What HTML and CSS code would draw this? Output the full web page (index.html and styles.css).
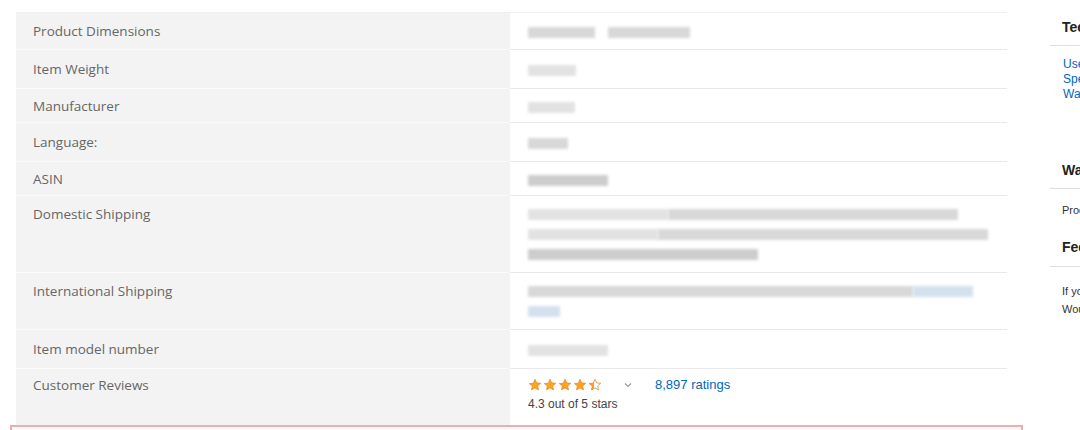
FILE: index.html
```html
<!DOCTYPE html>
<html>
  <head>
    <title>Product information</title>
    <meta charset="utf-8" />
    <link rel="stylesheet" href="styles.css">
  </head>
  <body>
    <div class="page">
      <div class="main">
        <table class="details" cellspacing="0" cellpadding="0">
          <tr>
            <th>Product Dimensions</th>
            <td><span class="blur" style="width:67px"></span><span class="blur" style="width:82px;margin-left:13px"></span></td>
          </tr>
          <tr class="tall">
            <th>Item Weight</th>
            <td><span class="blur light" style="width:48px"></span></td>
          </tr>
          <tr class="short">
            <th>Manufacturer</th>
            <td><span class="blur light" style="width:47px"></span></td>
          </tr>
          <tr class="tall">
            <th>Language:</th>
            <td><span class="blur" style="width:40px"></span></td>
          </tr>
          <tr class="short">
            <th>ASIN</th>
            <td><span class="blur dark" style="width:80px"></span></td>
          </tr>
          <tr>
            <th>Domestic Shipping</th>
            <td class="multi">
              <div class="line"><span class="blur light" style="width:140px"></span><span class="blur" style="width:290px"></span></div>
              <div class="line"><span class="blur light" style="width:130px"></span><span class="blur" style="width:330px"></span></div>
              <div class="line"><span class="blur dark" style="width:230px"></span></div>
            </td>
          </tr>
          <tr>
            <th>International Shipping</th>
            <td class="multi">
              <div class="line"><span class="blur" style="width:385px"></span><span class="blur blue" style="width:60px"></span></div>
              <div class="line"><span class="blur blue" style="width:32px"></span></div>
            </td>
          </tr>
          <tr class="tall">
            <th>Item model number</th>
            <td><span class="blur light" style="width:80px"></span></td>
          </tr>
          <tr class="reviews">
            <th>Customer Reviews</th>
            <td>
              <div class="rating">
                <span class="stars">
                  <svg width="14" height="14" viewBox="0 0 24 24"><path class="star" d="M12 2l2.9 6.3 6.9.7-5.2 4.6 1.5 6.8L12 17l-6.1 3.4 1.5-6.8L2.2 9.6l6.9-.7z"/></svg>
                  <svg width="14" height="14" viewBox="0 0 24 24"><path class="star" d="M12 2l2.9 6.3 6.9.7-5.2 4.6 1.5 6.8L12 17l-6.1 3.4 1.5-6.8L2.2 9.6l6.9-.7z"/></svg>
                  <svg width="14" height="14" viewBox="0 0 24 24"><path class="star" d="M12 2l2.9 6.3 6.9.7-5.2 4.6 1.5 6.8L12 17l-6.1 3.4 1.5-6.8L2.2 9.6l6.9-.7z"/></svg>
                  <svg width="14" height="14" viewBox="0 0 24 24"><path class="star" d="M12 2l2.9 6.3 6.9.7-5.2 4.6 1.5 6.8L12 17l-6.1 3.4 1.5-6.8L2.2 9.6l6.9-.7z"/></svg>
                  <svg width="14" height="14" viewBox="0 0 24 24">
                    <defs>
                      <linearGradient id="half">
                        <stop offset="45%" stop-color="#ffa41c" />
                        <stop offset="45%" stop-color="#fff" />
                      </linearGradient>
                    </defs>
                    <path class="star-half" d="M12 2l2.9 6.3 6.9.7-5.2 4.6 1.5 6.8L12 17l-6.1 3.4 1.5-6.8L2.2 9.6l6.9-.7z"/>
                  </svg>
                </span>
                <svg class="chevron" width="8" height="6" viewBox="0 0 8 6"><polyline points="1,1.5 4,4.5 7,1.5" /></svg>
                <a href="#" class="count">8,897 ratings</a>
              </div>
              <div class="out-of">4.3 out of 5 stars</div>
            </td>
          </tr>
        </table>
        <div class="notice"></div>
      </div>
      <div class="side">
        <h3>Technical Details</h3>
        <ul class="links">
          <li><a href="#">Used &amp; new offers</a></li>
          <li><a href="#">Specifications</a></li>
          <li><a href="#">Warranty information</a></li>
        </ul>
        <h3 class="second">Warranty &amp; Support</h3>
        <p class="small">Product Warranty: For warranty information</p>
        <h3 class="third">Feedback</h3>
        <p class="small fb">If you are a seller for this product</p>
        <p class="small fb">Would you like to tell us about a lower price?</p>
      </div>
    </div>
  </body>
</html>
```

FILE: styles.css
```css
body {
  margin: 0;
  background-color: #fff;
  overflow: hidden;
  font-family: "Open Sans", "DejaVu Sans", sans-serif;
}
.page {
  display: flex;
  width: 1080px;
  height: 430px;
  overflow: hidden;
  white-space: nowrap;
}
.main {
  flex: none;
  width: 1013px;
  margin-left: 10px;
  padding-top: 12px;
}
.details {
  width: 991px;
  margin-left: 6px;
  border-collapse: collapse;
  table-layout: fixed;
  border-top: 1px solid #f0f0f0;
}
.details th {
  width: 494px;
  box-sizing: border-box;
  background-color: #f3f3f3;
  color: #666;
  font-weight: normal;
  font-size: 13.5px;
  text-align: left;
  vertical-align: top;
  padding: 9px 17px;
  line-height: 18px;
  border-bottom: 1px solid #fafafa;
}
.details td {
  vertical-align: top;
  padding: 9px 18px;
  line-height: 18px;
  border-bottom: 1px solid #e9e9e9;
}
.details tr.tall th,
.details tr.tall td {
  padding-top: 10px;
  padding-bottom: 10px;
}
.details tr.short th,
.details tr.short td {
  padding-top: 8px;
  padding-bottom: 7px;
}
.details tr.reviews th {
  border-bottom: none;
  padding-top: 7px;
  padding-bottom: 11px;
}
.details tr.reviews td {
  border-bottom: none;
  padding-top: 5px;
  padding-bottom: 13px;
}
.details td.multi {
  padding-top: 8px;
  padding-bottom: 8px;
}
.line {
  height: 20px;
}
.blur {
  display: inline-block;
  height: 11px;
  vertical-align: middle;
  background-color: #d8d8d8;
  filter: blur(1.6px);
}
.blur.light {
  background-color: #e2e2e2;
}
.blur.dark {
  background-color: #cdcdcd;
}
.blur.blue {
  background-color: #d3e1ee;
}
.rating {
  display: flex;
  align-items: center;
  height: 22px;
  font-family: "Liberation Sans", Arial, sans-serif;
}
.stars {
  display: flex;
  gap: 1px;
}
.star {
  fill: #ffa41c;
  stroke: #de7921;
  stroke-width: 1;
}
.star-half {
  fill: url(#half);
  stroke: #de7921;
  stroke-width: 1.2;
}
.chevron {
  margin-left: 22px;
  fill: none;
  stroke: #999;
  stroke-width: 1.2;
}
.count {
  margin-left: 23px;
  color: #0066c0;
  font-size: 13px;
  text-decoration: none;
}
.out-of {
  font-family: "Liberation Sans", Arial, sans-serif;
  font-size: 12px;
  color: #444;
  line-height: 16px;
}
.notice {
  height: 40px;
  border: 2px solid #eab0b0;
  background-color: #fff8f8;
  border-bottom: none;
}
.side {
  flex: none;
  width: 300px;
  margin-left: 27px;
  padding-top: 18px;
  font-family: "Liberation Sans", Arial, sans-serif;
}
.side h3 {
  margin: 0;
  font-size: 14px;
  font-weight: bold;
  color: #222;
  line-height: 18px;
  padding: 0 0 9px 12px;
  border-bottom: 1px solid #ddd;
}
.side h3.second {
  margin-top: 59px;
}
.side h3.third {
  margin-top: 20px;
  padding-bottom: 10px;
}
.links {
  list-style: none;
  margin: 11px 0 0 0;
  padding: 0 0 0 13px;
  font-size: 12px;
  line-height: 15px;
}
.links a {
  color: #0066c0;
  text-decoration: none;
}
.small {
  margin: 14px 0 0 0;
  padding-left: 12px;
  font-size: 11px;
  line-height: 15px;
  color: #333;
}
.small.fb {
  margin-top: 0;
  line-height: 18px;
}
.side h3.third + .small.fb {
  margin-top: 15px;
}
```
